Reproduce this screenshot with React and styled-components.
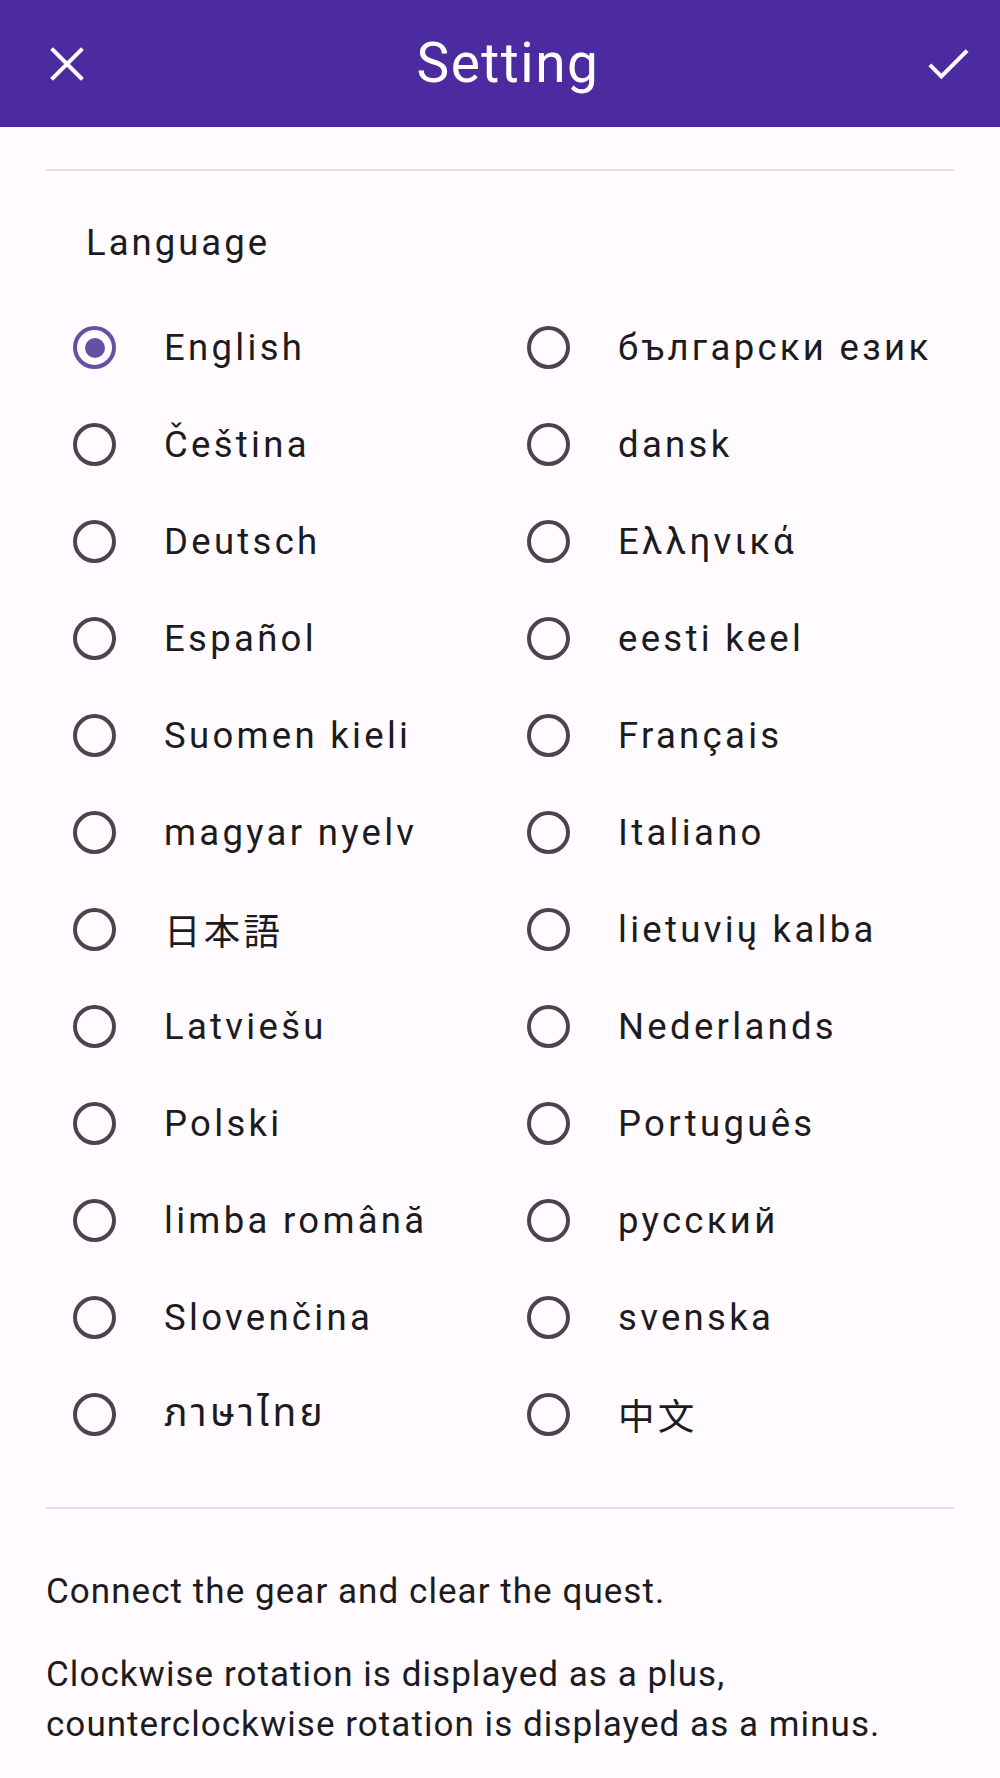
import React, { useState } from "react";
import styled, { createGlobalStyle } from "styled-components";

const Global = createGlobalStyle`
  html, body { margin: 0; padding: 0; background: #fffbfe; }
  body { font-family: Roboto, "Noto Sans", "Noto Sans Thai", "Noto Sans CJK JP", sans-serif; color: #1c1b1f; }
`;

const Page = styled.div`
  width: 1000px;
  min-height: 1778px;
  background: #fffbfe;
`;

const Header = styled.header`
  height: 127px;
  background: #4c2ba0;
  display: flex;
  align-items: center;
  justify-content: space-between;
  padding: 0 30px 0 46px;
  box-sizing: border-box;
`;

const IconButton = styled.button`
  background: none;
  border: 0;
  padding: 0;
  width: 42px;
  height: 42px;
  display: flex;
  align-items: center;
  justify-content: center;
  color: #fff;
`;

const Title = styled.h1`
  margin: 0;
  font-family: Roboto, sans-serif;
  font-weight: 400;
  font-size: 55px;
  line-height: 1;
  letter-spacing: 1.5px;
  color: #fff;
`;

const Body = styled.main`
  padding: 0 46px;
`;

const Divider = styled.hr`
  border: 0;
  height: 2px;
  background: #e4e1e6;
  margin: ${(p) => p.$top}px 0 0;
`;

const SectionLabel = styled.div`
  margin: 49px 0 0 40px;
  font-size: 36.5px;
  line-height: 46px;
  letter-spacing: 3px;
`;

const Grid = styled.div`
  display: grid;
  grid-template-columns: 1fr 1fr;
  grid-auto-rows: 97px;
  margin-top: 33px;
`;

const Option = styled.label`
  display: flex;
  align-items: center;
  cursor: pointer;
`;

const Radio = styled.span`
  width: 43px;
  height: 43px;
  box-sizing: border-box;
  border-radius: 50%;
  border: 4px solid ${(p) => (p.$checked ? "#6750a4" : "#49454f")};
  margin-left: 27px;
  display: flex;
  align-items: center;
  justify-content: center;
  flex-shrink: 0;
  &::after {
    content: "";
    width: 20px;
    height: 20px;
    border-radius: 50%;
    background: ${(p) => (p.$checked ? "#6750a4" : "transparent")};
  }
`;

const OptionText = styled.span`
  margin-left: 48px;
  font-size: ${(p) => p.$size || 36.5}px;
  letter-spacing: 3.3px;
  white-space: nowrap;
  font-family: Roboto, "Noto Sans", "Noto Sans Thai", ${(p) => p.$cjk || "\"Noto Sans CJK JP\""}, sans-serif;
`;

const Note = styled.p`
  margin: ${(p) => p.$top}px 0 0;
  font-size: 35px;
  line-height: 50px;
  letter-spacing: 1.05px;
`;

const languages = [
  ["English"],
  ["български език"],
  ["Čeština"],
  ["dansk"],
  ["Deutsch"],
  ["Ελληνικά"],
  ["Español"],
  ["eesti keel"],
  ["Suomen kieli"],
  ["Français"],
  ["magyar nyelv"],
  ["Italiano"],
  ["日本語", "\"Noto Sans CJK JP\""],
  ["lietuvių kalba"],
  ["Latviešu"],
  ["Nederlands"],
  ["Polski"],
  ["Português"],
  ["limba română"],
  ["русский"],
  ["Slovenčina"],
  ["svenska"],
  ["ภาษาไทย", null, 39],
  ["中文", "\"Noto Sans CJK SC\""],
];

export default function App() {
  const [lang, setLang] = useState("English");
  return (
    <Page>
      <Global />
      <Header>
        <IconButton aria-label="close">
          <svg width="36" height="36" viewBox="0 0 36 36" fill="none" stroke="#fff" strokeWidth="4" strokeLinecap="square">
            <path d="M4 4 L32 32 M32 4 L4 32" />
          </svg>
        </IconButton>
        <Title>Setting</Title>
        <IconButton aria-label="confirm">
          <svg width="44" height="36" viewBox="0 0 44 36" fill="none" stroke="#fff" strokeWidth="4.2">
            <path d="M2 19 L14 31 L41 4" />
          </svg>
        </IconButton>
      </Header>
      <Body>
        <Divider $top={42} />
        <SectionLabel>Language</SectionLabel>
        <Grid>
          {languages.map(([name, cjk, size]) => (
            <Option key={name} onClick={() => setLang(name)}>
              <Radio $checked={lang === name} />
              <OptionText $cjk={cjk} $size={size}>{name}</OptionText>
            </Option>
          ))}
        </Grid>
        <Divider $top={44} />
        <Note $top={58}>Connect the gear and clear the quest.</Note>
        <Note $top={33}>
          Clockwise rotation is displayed as a plus,
          <br />
          counterclockwise rotation is displayed as a minus.
        </Note>
      </Body>
    </Page>
  );
}
